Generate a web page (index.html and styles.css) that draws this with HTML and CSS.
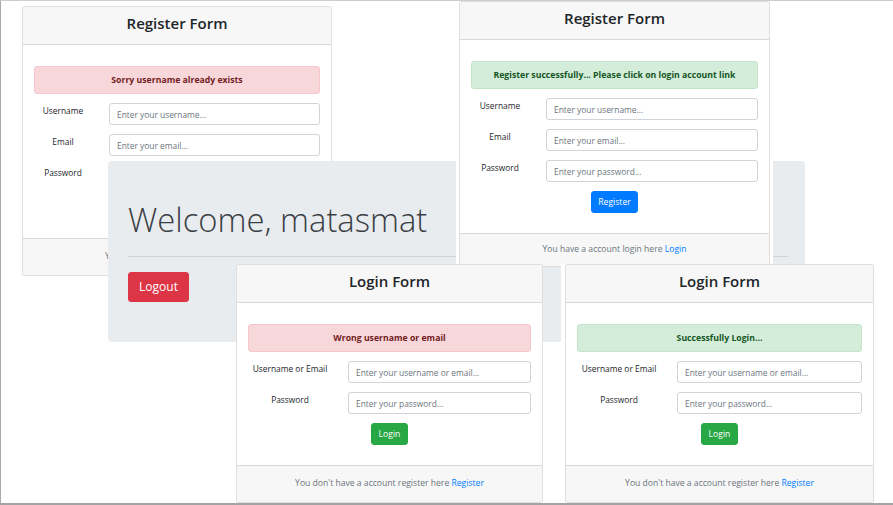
FILE: index.html
```html
<!DOCTYPE html>
<html lang="en">
<head>
<meta charset="utf-8">
<title>Forms collage</title>
<link rel="stylesheet" href="styles.css">
</head>
<body>
<div class="frame">

  <section class="card card-reg-error">
    <header class="card-header">Register Form</header>
    <div class="card-body">
      <div class="alert alert-danger">Sorry username already exists</div>
      <div class="form-row reg-row"><label>Username</label><input type="text" placeholder="Enter your username..."></div>
      <div class="form-row reg-row"><label>Email</label><input type="text" placeholder="Enter your email..."></div>
      <div class="form-row reg-row"><label>Password</label><input class="covered" type="password" placeholder="Enter your password..."></div>
      <div class="btn-row covered"><button class="btn btn-primary btn-reg">Register</button></div>
    </div>
    <footer class="card-footer">You have a account login here <a href="#">Login</a></footer>
  </section>

  <section class="jumbotron">
    <h1 class="display">Welcome, matasmat</h1>
    <hr class="jumbo-rule">
    <button class="btn btn-danger btn-logout">Logout</button>
  </section>

  <section class="card card-reg-success">
    <header class="card-header">Register Form</header>
    <div class="card-body">
      <div class="alert alert-success">Register successfully... Please click on login account link</div>
      <div class="form-row reg-row"><label>Username</label><input type="text" placeholder="Enter your username..."></div>
      <div class="form-row reg-row"><label>Email</label><input type="text" placeholder="Enter your email..."></div>
      <div class="form-row reg-row"><label>Password</label><input type="password" placeholder="Enter your password..."></div>
      <div class="btn-row"><button class="btn btn-primary btn-reg">Register</button></div>
    </div>
    <footer class="card-footer footer-short">You have a account login here <a href="#">Login</a></footer>
  </section>

  <section class="card card-login-error">
    <header class="card-header">Login Form</header>
    <div class="card-body">
      <div class="alert alert-danger">Wrong username or email</div>
      <div class="form-row login-row"><label>Username or Email</label><input type="text" placeholder="Enter your username or email..."></div>
      <div class="form-row login-row"><label>Password</label><input type="password" placeholder="Enter your password..."></div>
      <div class="btn-row"><button class="btn btn-success btn-login">Login</button></div>
    </div>
    <footer class="card-footer">You don't have a account register here <a href="#">Register</a></footer>
  </section>

  <section class="card card-login-success">
    <header class="card-header">Login Form</header>
    <div class="card-body">
      <div class="alert alert-success">Successfully Login...</div>
      <div class="form-row login-row"><label>Username or Email</label><input type="text" placeholder="Enter your username or email..."></div>
      <div class="form-row login-row"><label>Password</label><input type="password" placeholder="Enter your password..."></div>
      <div class="btn-row"><button class="btn btn-success btn-login">Login</button></div>
    </div>
    <footer class="card-footer">You don't have a account register here <a href="#">Register</a></footer>
  </section>

</div>
</body>
</html>
```

FILE: styles.css
```css
* { box-sizing: border-box; }

html, body {
  margin: 0;
  padding: 0;
  background: #fff;
}

body {
  font-family: "Open Sans", "Noto Sans", sans-serif;
  color: #212529;
}

.frame {
  position: relative;
  width: 893px;
  height: 505px;
  overflow: hidden;
  background: #fff;
  border-left: 1px solid #a9a9a9;
  border-top: 1px solid #cdcdcd;
  border-bottom: 2px solid #a3a3a3;
}

/* ---------- cards (screenshots placed on a free canvas) ---------- */
.card {
  position: absolute;
  display: flex;
  flex-direction: column;
  background: #fff;
  border: 1px solid rgba(0, 0, 0, 0.125);
  border-radius: 3px;
}

.card-reg-error   { left: 21px;  top: 5px;   width: 310px; z-index: 1; }
.card-reg-success { left: 458px; top: 0;     width: 311px; z-index: 3;
                    box-shadow: -3px 0 0 #fff, 3px 0 0 #fff; }
.card-login-error { left: 235px; top: 263px; width: 307px; z-index: 4; }
.card-login-success { left: 564px; top: 263px; width: 309px; z-index: 5;
                    box-shadow: -4px 0 0 #fff; }

/* parts of the bottom card that lie under the jumbotron */
.covered { visibility: hidden; }

.card-header {
  height: 38px;
  padding-bottom: 5px;
  display: flex;
  align-items: center;
  justify-content: center;
  background: #f7f7f7;
  border-bottom: 1px solid rgba(0, 0, 0, 0.125);
  border-radius: 3px 3px 0 0;
  font-size: 15px;
  font-weight: 600;
  color: #212529;
}

.card-body {
  padding: 21px 11px 20px;
}

.alert {
  height: 28px;
  display: flex;
  align-items: center;
  justify-content: center;
  border: 1px solid transparent;
  border-radius: 3px;
  font-size: 8.7px;
  font-weight: 700;
  margin-bottom: 9px;
}

.alert-danger {
  background: #f8d7da;
  border-color: #f5c6cb;
  color: #721c24;
}

.alert-success {
  background: #d4edda;
  border-color: #c3e6cb;
  color: #155724;
}

.form-row {
  display: grid;
  align-items: start;
  margin-bottom: 9px;
}

.reg-row   { grid-template-columns: 58px 1fr; column-gap: 17px; }
.login-row { grid-template-columns: 84px 1fr; column-gap: 16px; }

.form-row label {
  text-align: center;
  font-size: 8.4px;
  line-height: 11px;
  padding-top: 2px;
  color: #212529;
  white-space: nowrap;
}

.form-row input {
  height: 22px;
  width: 100%;
  margin: 0;
  padding: 0 7px;
  border: 1px solid #ced4da;
  border-radius: 3px;
  background: #fff;
  font-family: inherit;
  font-size: 8.4px;
  color: #495057;
  outline: none;
}

.form-row input::placeholder {
  color: #6c757d;
}

.btn-row {
  display: flex;
  justify-content: center;
}

.btn {
  display: inline-flex;
  align-items: center;
  justify-content: center;
  border: 1px solid transparent;
  border-radius: 3px;
  color: #fff;
  font-family: inherit;
  padding: 0 0 1px;
  margin: 0;
}

.btn-primary { background: #007bff; border-color: #007bff; }
.btn-success { background: #28a745; border-color: #28a745; }
.btn-danger  { background: #dc3545; border-color: #dc3545; }

.btn-reg   { width: 47px; height: 22px; font-size: 8.6px; }
.btn-login { width: 37px; height: 22px; font-size: 8.6px; }

.card-footer {
  height: 37px;
  line-height: 34px;
  text-align: center;
  background: #f7f7f7;
  border-top: 1px solid rgba(0, 0, 0, 0.125);
  border-radius: 0 0 3px 3px;
  font-size: 8.6px;
  color: #6c757d;
  white-space: nowrap;
}

.footer-short { height: 33px; line-height: 30px; }

.card-footer a {
  color: #007bff;
  text-decoration: none;
}

/* ---------- jumbotron ---------- */
.jumbotron {
  position: absolute;
  left: 107px;
  top: 160px;
  width: 697px;
  height: 181px;
  z-index: 2;
  background: #e9ecef;
  border-radius: 4px;
  padding: 40px 17px 0 20px;
}

.display {
  margin: 0;
  font-size: 32.8px;
  line-height: 38px;
  font-weight: 300;
  color: #3b4046;
  white-space: nowrap;
}

.jumbo-rule {
  margin: 17px 0 15px;
  border: 0;
  border-top: 1px solid rgba(0, 0, 0, 0.1);
}

.btn-logout {
  width: 61px;
  height: 30px;
  font-size: 12px;
}
```
